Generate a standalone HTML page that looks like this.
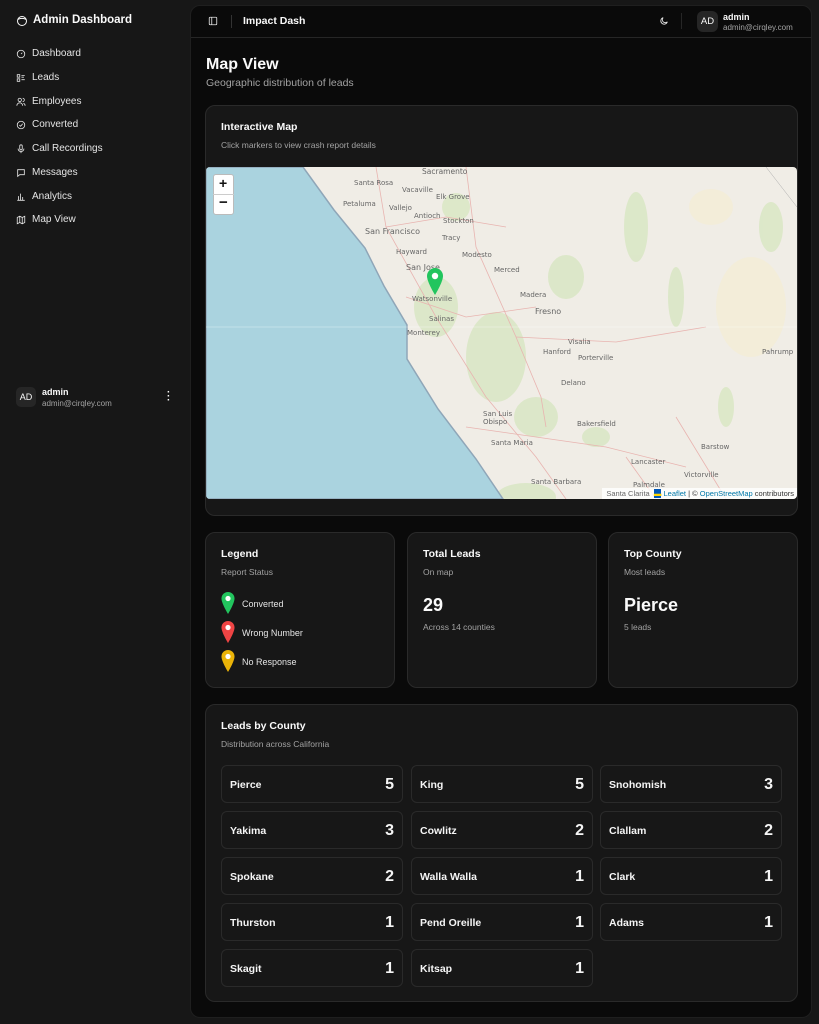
<!DOCTYPE html>
<html><head><meta charset="utf-8"><style>
*{box-sizing:border-box;margin:0;padding:0}
body{width:819px;height:1024px;background:#171717;font-family:"Liberation Sans",sans-serif;color:#fafafa;position:relative;overflow:hidden}
.a{position:absolute}
.nav{position:absolute;left:16px;font-size:10px;color:#e5e5e5;display:flex;align-items:center;gap:6px}
.nav svg{width:10px;height:10px;stroke:#e5e5e5;fill:none;stroke-width:2}
.main{position:absolute;left:190px;top:5px;width:622px;height:1013px;background:#0a0a0a;border-radius:10px;border:1px solid #1f1f1f}
.card{position:absolute;background:#171717;border:1px solid #2a2a2a;border-radius:10px}
.t{position:absolute;font-size:11px;font-weight:bold;color:#fafafa}
.s{position:absolute;font-size:9px;color:#a3a3a3}
.tile{position:absolute;width:182px;height:38px;border:1px solid #2a2a2a;border-radius:6px;background:#171717}
.tile span{position:absolute;left:8px;top:13px;font-size:10.5px;font-weight:bold;color:#f5f5f5}
.tile b{position:absolute;right:8px;top:10px;font-size:16px;color:#f5f5f5}
.lbl{position:absolute;font-size:7px;color:#666;font-family:"DejaVu Sans",sans-serif}
</style></head><body>
<svg class="a" style="left:16px;top:15px" width="12" height="12" viewBox="0 0 24 24" fill="none" stroke="#fafafa" stroke-width="2"><circle cx="12" cy="12" r="9"/><path d="M4 9c4-3 12-3 16 0"/></svg>
<div class="a" style="left:33px;top:14px;font-size:11.5px;font-weight:bold">Admin Dashboard</div>
<div class="nav" style="top:48px"><svg viewBox="0 0 24 24"><circle cx="12" cy="12" r="9"/><path d="M12 12l3-3"/></svg>Dashboard</div>
<div class="nav" style="top:72px"><svg viewBox="0 0 24 24"><rect x="3" y="4" width="6" height="6"/><rect x="3" y="14" width="6" height="6"/><path d="M13 6h8M13 10h6M13 16h8"/></svg>Leads</div>
<div class="nav" style="top:96px"><svg viewBox="0 0 24 24"><circle cx="9" cy="7" r="4"/><path d="M2 21a7 7 0 0114 0M16 3a4 4 0 010 8M22 21a7 7 0 00-4-6"/></svg>Employees</div>
<div class="nav" style="top:119px"><svg viewBox="0 0 24 24"><circle cx="12" cy="12" r="9"/><path d="M8 12l3 3 5-6"/></svg>Converted</div>
<div class="nav" style="top:143px"><svg viewBox="0 0 24 24"><rect x="9" y="2" width="6" height="12" rx="3"/><path d="M5 11a7 7 0 0014 0M12 18v4"/></svg>Call Recordings</div>
<div class="nav" style="top:167px"><svg viewBox="0 0 24 24"><path d="M4 4h16v12H9l-5 4z"/></svg>Messages</div>
<div class="nav" style="top:191px"><svg viewBox="0 0 24 24"><path d="M3 20h18M6 20V10M11 20V4M16 20v-8"/></svg>Analytics</div>
<div class="nav" style="top:214px"><svg viewBox="0 0 24 24"><path d="M3 6l6-3 6 3 6-3v15l-6 3-6-3-6 3zM9 3v15M15 6v15"/></svg>Map View</div>
<div class="a" style="left:16px;top:387px;width:20px;height:20px;border-radius:5px;background:#262626;font-size:9px;text-align:center;line-height:20px">AD</div>
<div class="a" style="left:42px;top:387px;font-size:9px;font-weight:bold">admin</div>
<div class="a" style="left:42px;top:399px;font-size:8px;color:#a3a3a3">admin@cirqley.com</div>
<div class="a" style="left:167px;top:391px;font-size:10px;font-weight:bold;line-height:4px">·<br>·<br>·</div>

<div class="main">
<div class="a" style="left:0;top:31px;width:620px;height:1px;background:#262626"></div>
<svg class="a" style="left:17px;top:10px" width="10" height="10" viewBox="0 0 24 24" fill="none" stroke="#e5e5e5" stroke-width="2"><rect x="3" y="3" width="18" height="18" rx="2"/><path d="M9 3v18"/></svg>
<div class="a" style="left:40px;top:9px;width:1px;height:13px;background:#333"></div>
<div class="a" style="left:52px;top:9px;font-size:10.5px;font-weight:bold">Impact Dash</div>
<svg class="a" style="left:468px;top:10px" width="10" height="10" viewBox="0 0 24 24" fill="none" stroke="#e5e5e5" stroke-width="2"><path d="M20 14A8 8 0 1110 4a6 6 0 0010 10z"/></svg>
<div class="a" style="left:490px;top:7px;width:1px;height:16px;background:#262626"></div>
<div class="a" style="left:506px;top:5px;width:21px;height:21px;border-radius:6px;background:#262626;font-size:9.5px;text-align:center;line-height:21px">AD</div>
<div class="a" style="left:532px;top:6px;font-size:9px;font-weight:bold">admin</div>
<div class="a" style="left:532px;top:17px;font-size:8px;color:#a3a3a3">admin@cirqley.com</div>
<div class="a" style="left:15px;top:50px;font-size:16px;font-weight:bold">Map View</div>
<div class="a" style="left:15px;top:71px;font-size:10.5px;color:#a3a3a3">Geographic distribution of leads</div>
</div>

<div class="card" style="left:205px;top:105px;width:593px;height:411px"></div>
<div class="t" style="left:221px;top:121px;font-size:10.5px">Interactive Map</div>
<div class="s" style="left:221px;top:140px;font-size:8.5px">Click markers to view crash report details</div>
<div class="a" style="left:206px;top:167px;width:591px;height:332px;overflow:hidden;border-radius:4px;background:#f0ede6">
<svg width="591" height="332" viewBox="0 0 591 332">
<g fill="#d8e6c2" opacity=".8">
<ellipse cx="230" cy="140" rx="22" ry="30"/><ellipse cx="290" cy="190" rx="30" ry="45"/><ellipse cx="330" cy="250" rx="22" ry="20"/><ellipse cx="360" cy="110" rx="18" ry="22"/><ellipse cx="430" cy="60" rx="12" ry="35"/><ellipse cx="470" cy="130" rx="8" ry="30"/><ellipse cx="250" cy="40" rx="14" ry="14"/><ellipse cx="390" cy="270" rx="14" ry="10"/><ellipse cx="565" cy="60" rx="12" ry="25"/><ellipse cx="320" cy="330" rx="30" ry="14"/><ellipse cx="520" cy="240" rx="8" ry="20"/>
</g>
<g fill="#f5ecd0" opacity=".6"><ellipse cx="545" cy="140" rx="35" ry="50"/><ellipse cx="505" cy="40" rx="22" ry="18"/></g>
<g stroke="#e8b4b0" fill="none" stroke-width=".8"><path d="M170 0L180 60L230 150L280 230L330 290L360 332"/><path d="M260 0L270 80L310 170L335 230L340 260"/><path d="M180 60L240 50L300 60M200 130L260 150L330 140M260 260L330 270L400 280L480 300M310 170L410 175L500 160"/><path d="M420 290L450 332M470 250L520 332"/></g>
<path fill="#aad3df" stroke="#8fa6b8" stroke-width="1.5" d="M0 0H97L128 43L159 81L178 119L201 158L201 192L232 242L270 292L297 332H0Z"/>
<path d="M0 160H591" stroke="#fff" stroke-width=".6" opacity=".6"/>
<path d="M560 0L591 40" stroke="#aaa" stroke-width=".5"/>
</svg>
<div class="lbl" style="left:148px;top:12px">Santa Rosa</div><div class="lbl" style="left:196px;top:19px">Vacaville</div><div class="lbl" style="left:216px;top:0px;font-size:7.5px">Sacramento</div>
<div class="lbl" style="left:137px;top:33px">Petaluma</div><div class="lbl" style="left:183px;top:37px">Vallejo</div><div class="lbl" style="left:230px;top:26px">Elk Grove</div>
<div class="lbl" style="left:208px;top:45px">Antioch</div><div class="lbl" style="left:237px;top:50px">Stockton</div>
<div class="lbl" style="left:159px;top:60px;font-size:8px">San Francisco</div><div class="lbl" style="left:236px;top:67px">Tracy</div>
<div class="lbl" style="left:190px;top:81px">Hayward</div><div class="lbl" style="left:256px;top:84px">Modesto</div>
<div class="lbl" style="left:200px;top:96px;font-size:8px">San Jose</div><div class="lbl" style="left:288px;top:99px">Merced</div>
<div class="lbl" style="left:206px;top:128px">Watsonville</div><div class="lbl" style="left:314px;top:124px">Madera</div>
<div class="lbl" style="left:329px;top:140px;font-size:8px">Fresno</div><div class="lbl" style="left:223px;top:148px">Salinas</div>
<div class="lbl" style="left:201px;top:162px">Monterey</div><div class="lbl" style="left:362px;top:171px">Visalia</div>
<div class="lbl" style="left:337px;top:181px">Hanford</div><div class="lbl" style="left:372px;top:187px">Porterville</div>
<div class="lbl" style="left:355px;top:212px">Delano</div><div class="lbl" style="left:556px;top:181px">Pahrump</div>
<div class="lbl" style="left:277px;top:243px">San Luis<br>Obispo</div><div class="lbl" style="left:371px;top:253px">Bakersfield</div>
<div class="lbl" style="left:285px;top:272px">Santa Maria</div><div class="lbl" style="left:495px;top:276px">Barstow</div>
<div class="lbl" style="left:425px;top:291px">Lancaster</div><div class="lbl" style="left:478px;top:304px">Victorville</div>
<div class="lbl" style="left:325px;top:311px">Santa Barbara</div><div class="lbl" style="left:427px;top:314px">Palmdale</div>
<svg class="a" style="left:221px;top:101px" width="16" height="27" viewBox="0 0 16 27"><path d="M8 0A8 8 0 000 8c0 6 8 19 8 19s8-13 8-19A8 8 0 008 0z" fill="#22c55e"/><circle cx="8" cy="8" r="3.2" fill="#fff"/></svg>
<div class="a" style="left:7px;top:7px;width:21px;height:41px;background:#fff;border:1px solid #bbb;border-radius:3px"></div>
<div class="a" style="left:7px;top:27px;width:21px;height:1px;background:#ccc"></div>
<div class="a" style="left:13px;top:8px;font-size:14px;font-weight:bold;color:#111">+</div>
<div class="a" style="left:13px;top:27px;font-size:15px;font-weight:bold;color:#111">−</div>
<div class="a" style="right:0;bottom:0;background:rgba(255,255,255,.8);font-size:7.5px;color:#333;padding:1px 3px 1px 4px"><span style="color:#666">Santa Clarita</span> &nbsp;<span style="color:#ffd500;background:#0057b7">▬</span> <span style="color:#0078a8">Leaflet</span> | © <span style="color:#0078a8">OpenStreetMap</span> contributors</div>
</div>

<div class="card" style="left:205px;top:532px;width:190px;height:156px"></div>
<div class="t" style="left:221px;top:548px;font-size:10.5px">Legend</div>
<div class="s" style="left:221px;top:567px;font-size:8.5px">Report Status</div>
<svg class="a" style="left:221px;top:592px" width="14" height="22" viewBox="0 0 16 27"><path d="M8 0A8 8 0 000 8c0 6 8 19 8 19s8-13 8-19A8 8 0 008 0z" fill="#22c55e"/><circle cx="8" cy="8" r="3.2" fill="#fff"/></svg>
<svg class="a" style="left:221px;top:621px" width="14" height="22" viewBox="0 0 16 27"><path d="M8 0A8 8 0 000 8c0 6 8 19 8 19s8-13 8-19A8 8 0 008 0z" fill="#ef4444"/><circle cx="8" cy="8" r="3.2" fill="#fff"/></svg>
<svg class="a" style="left:221px;top:650px" width="14" height="22" viewBox="0 0 16 27"><path d="M8 0A8 8 0 000 8c0 6 8 19 8 19s8-13 8-19A8 8 0 008 0z" fill="#eab308"/><circle cx="8" cy="8" r="3.2" fill="#fff"/></svg>
<div class="a" style="left:242px;top:599px;font-size:9px;color:#e5e5e5">Converted</div>
<div class="a" style="left:242px;top:628px;font-size:9px;color:#e5e5e5">Wrong Number</div>
<div class="a" style="left:242px;top:657px;font-size:9px;color:#e5e5e5">No Response</div>

<div class="card" style="left:407px;top:532px;width:190px;height:156px"></div>
<div class="t" style="left:423px;top:548px;font-size:10.5px">Total Leads</div>
<div class="s" style="left:423px;top:567px;font-size:8.5px">On map</div>
<div class="t" style="left:423px;top:595px;font-size:18px">29</div>
<div class="s" style="left:423px;top:622px;font-size:8.5px">Across 14 counties</div>

<div class="card" style="left:608px;top:532px;width:190px;height:156px"></div>
<div class="t" style="left:624px;top:548px;font-size:10.5px">Top County</div>
<div class="s" style="left:624px;top:567px;font-size:8.5px">Most leads</div>
<div class="t" style="left:624px;top:595px;font-size:18px">Pierce</div>
<div class="s" style="left:624px;top:622px;font-size:8.5px">5 leads</div>

<div class="card" style="left:205px;top:704px;width:593px;height:298px"></div>
<div class="t" style="left:221px;top:720px;font-size:10.5px">Leads by County</div>
<div class="s" style="left:221px;top:739px;font-size:8.5px">Distribution across California</div>
<div class="tile" style="left:221px;top:765px"><span>Pierce</span><b>5</b></div>
<div class="tile" style="left:411px;top:765px"><span>King</span><b>5</b></div>
<div class="tile" style="left:600px;top:765px"><span>Snohomish</span><b>3</b></div>
<div class="tile" style="left:221px;top:811px"><span>Yakima</span><b>3</b></div>
<div class="tile" style="left:411px;top:811px"><span>Cowlitz</span><b>2</b></div>
<div class="tile" style="left:600px;top:811px"><span>Clallam</span><b>2</b></div>
<div class="tile" style="left:221px;top:857px"><span>Spokane</span><b>2</b></div>
<div class="tile" style="left:411px;top:857px"><span>Walla Walla</span><b>1</b></div>
<div class="tile" style="left:600px;top:857px"><span>Clark</span><b>1</b></div>
<div class="tile" style="left:221px;top:903px"><span>Thurston</span><b>1</b></div>
<div class="tile" style="left:411px;top:903px"><span>Pend Oreille</span><b>1</b></div>
<div class="tile" style="left:600px;top:903px"><span>Adams</span><b>1</b></div>
<div class="tile" style="left:221px;top:949px"><span>Skagit</span><b>1</b></div>
<div class="tile" style="left:411px;top:949px"><span>Kitsap</span><b>1</b></div>
</body></html>
